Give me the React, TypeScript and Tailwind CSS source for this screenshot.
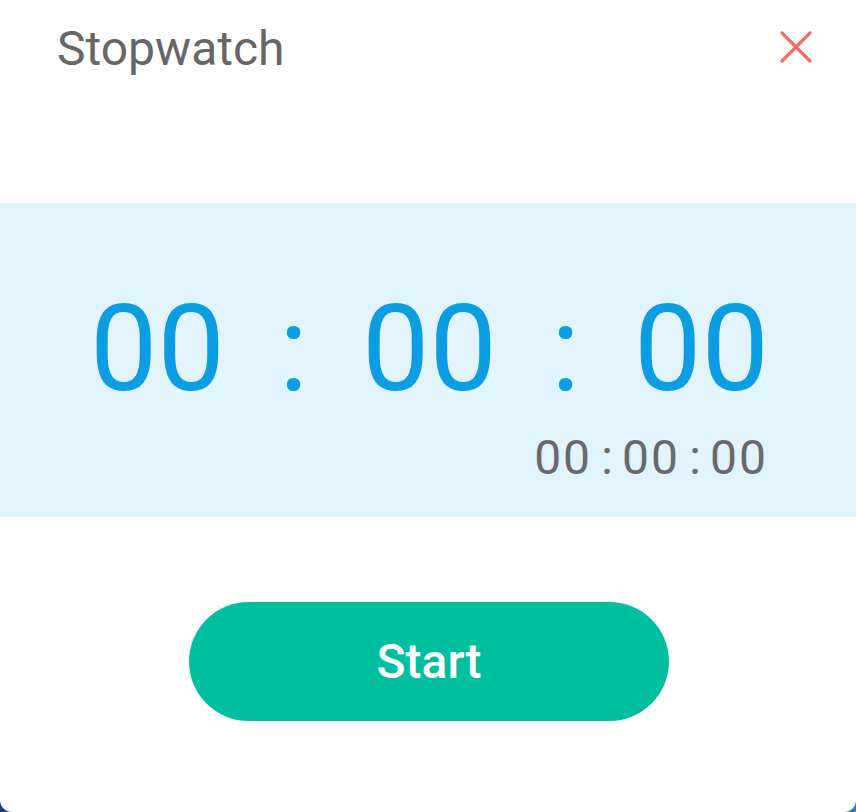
import React from "react";

const font = { fontFamily: "Roboto, 'Noto Sans', sans-serif" };

function BigCell({ children }: { children: React.ReactNode }) {
  return (
    <div className="w-[136px] text-center text-[120px] leading-[120px] text-[#0a9de2]">
      {children}
    </div>
  );
}

export default function App() {
  return (
    <div
      className="w-[856px] h-[812px] bg-gradient-to-r from-[#17398a] to-[#2a7cc4]"
      style={font}
    >
      <div className="h-full bg-white rounded-b-[12px] flex flex-col overflow-hidden">
        {/* header */}
        <div className="h-[203px] flex items-start justify-between pl-[57px] pr-[44px] pt-[25px]">
          <h1 className="text-[48px] leading-[48px] text-[#666666] font-normal">
            Stopwatch
          </h1>
          <button className="mt-[6px] w-[32px] h-[32px] flex items-center justify-center">
            <svg width="32" height="32" viewBox="0 0 32 32" fill="none">
              <path
                d="M2 2 L30 30 M30 2 L2 30"
                stroke="#f06e64"
                strokeWidth="3.2"
                strokeLinecap="round"
              />
            </svg>
          </button>
        </div>

        {/* time display */}
        <div className="h-[314px] bg-[#e1f3fd] pt-[86px] flex flex-col">
          <div className="flex justify-center pl-[3px]">
            <BigCell>00</BigCell>
            <BigCell>:</BigCell>
            <BigCell>00</BigCell>
            <BigCell>:</BigCell>
            <BigCell>00</BigCell>
          </div>
          <div className="mt-[25px] flex justify-end pr-[88px] text-[48px] leading-[48px] text-[#67696b]">
            <span className="tracking-[2px]">00</span>
            <span className="w-[30px] text-center">:</span>
            <span className="tracking-[2px]">00</span>
            <span className="w-[30px] text-center">:</span>
            <span className="tracking-[2px]">00</span>
          </div>
        </div>

        {/* controls */}
        <div className="flex justify-center pt-[85px]">
          <button className="ml-[2px] w-[480px] h-[119px] rounded-full bg-[#00bf9f] text-white text-[48px] font-medium">
            Start
          </button>
        </div>
      </div>
    </div>
  );
}
